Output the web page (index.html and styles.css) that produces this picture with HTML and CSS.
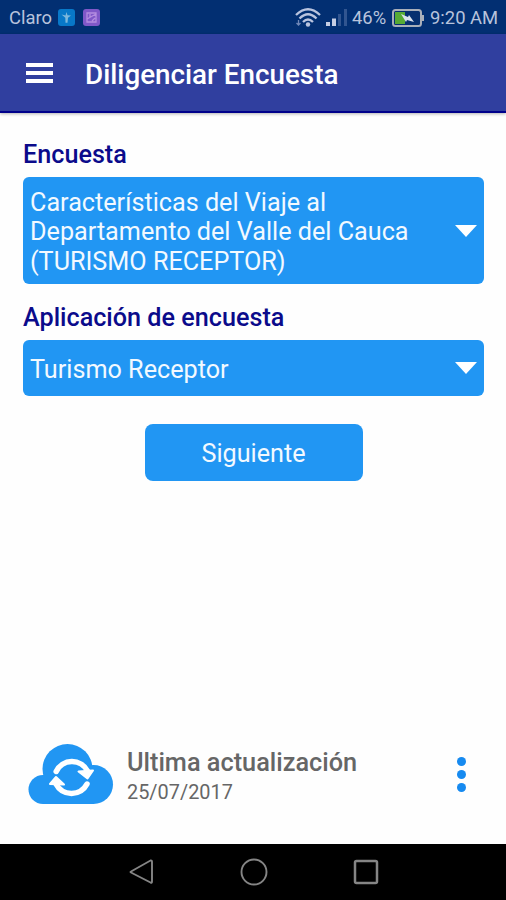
FILE: index.html
```html
<!DOCTYPE html>
<html lang="es">
<head>
  <meta charset="UTF-8">
  <meta name="viewport" content="width=device-width, initial-scale=1">
  <title>Diligenciar Encuesta</title>
  <link rel="stylesheet" href="styles.css">
</head>
<body>
  <div class="screen">
    <div class="status-bar">
      <span class="carrier">Claro</span>
      <svg class="notif" width="17" height="17" viewBox="0 0 17 17">
        <rect width="17" height="17" rx="3" fill="#0878c8"/>
        <path d="M3.500 5.500l4 1L8.500 3l1 3.300 3.500.200-3 2.200-.500 5h-2l-.200-5z" fill="#7db7dc"/>
      </svg>
      <svg class="notif" width="17" height="17" viewBox="0 0 17 17">
        <rect width="17" height="17" rx="3" fill="#8058c8"/>
        <path d="M4 4h9v9H4zM4 10l9-5M7 5v3M9 12l3-3" fill="none" stroke="#b48de0" stroke-width="1.300"/>
      </svg>
      <div class="status-right">
        <svg class="wifi" width="26" height="19" viewBox="0 0 26 19">
          <g fill="none" stroke="#b9c4df" stroke-width="2.300">
            <path d="M1 7Q13-4.500 25 7"/>
            <path d="M4.500 10.500Q13 2 21.500 10.500"/>
            <path d="M8 14Q13 9 18 14"/>
          </g>
          <circle cx="13" cy="16.500" r="2.200" fill="#b9c4df"/>
          <path d="M3.500 12v5M1.500 15l2 2 2-2" fill="none" stroke="#7188b8" stroke-width="1.300"/>
        </svg>
        <svg class="signal" width="22" height="18" viewBox="0 0 22 18">
          <path d="M0 13h4v4H0zM6 9.500h4V17H6z" fill="#c5cee4"/>
          <path d="M12 5h3v12h-3zM18 0h3v17h-3z" fill="#315590"/>
        </svg>
        <span class="percent">46%</span>
        <svg class="battery" width="32" height="18" viewBox="0 0 32 18">
          <rect x="1" y="1" width="28" height="16" rx="2.500" fill="#062f70" stroke="#a9afba" stroke-width="2"/>
          <path d="M30 6h2v6h-2z" fill="#a9afba"/>
          <path d="M3 3h10v12H3z" fill="#56ab35"/>
          <path d="M9 5l7 3 1-2 5 7-7-2-1 2z" fill="#dbe2ee"/>
        </svg>
        <span class="clock">9:20 AM</span>
      </div>
    </div>

    <div class="app-bar">
      <div class="menu-icon"><span></span><span></span><span></span></div>
      <h1>Diligenciar Encuesta</h1>
    </div>

    <div class="content">
      <h2 class="label-survey">Encuesta</h2>
      <div class="select select-tall">
        <span class="select-text">Características del Viaje al<br>Departamento del Valle del Cauca<br>(TURISMO RECEPTOR)</span>
        <svg class="arrow" width="22" height="12" viewBox="0 0 22 12"><path d="M0 0h22L11 12z" fill="#fff"/></svg>
      </div>
      <h2 class="label-apply">Aplicación de encuesta</h2>
      <div class="select">
        <span class="select-text">Turismo Receptor</span>
        <svg class="arrow" width="22" height="12" viewBox="0 0 22 12"><path d="M0 0h22L11 12z" fill="#fff"/></svg>
      </div>
      <button class="next-btn">Siguiente</button>
    </div>

    <div class="update">
      <svg class="cloud" width="86" height="62" viewBox="0 0 86 62">
        <g fill="#2196f3">
          <circle cx="39.500" cy="26" r="25"/>
          <circle cx="15" cy="46.500" r="14.500"/>
          <circle cx="65.500" cy="41.500" r="19.500"/>
          <path d="M15 32h50v29H15z"/>
        </g>
        <path d="M28.200 28.500A17.500 17.500 0 0 1 59.500 28" fill="none" stroke="#fff" stroke-width="5.500" stroke-linecap="round"/>
        <path d="M50.500 28.500L65 27.500 59.500 35.500z" fill="#fff" stroke="#fff" stroke-width="2" stroke-linejoin="round"/>
        <path d="M59 41A17.500 17.500 0 0 1 28 41" fill="none" stroke="#fff" stroke-width="5.500" stroke-linecap="round"/>
        <path d="M22 41L28 34 36 41.500z" fill="#fff" stroke="#fff" stroke-width="2" stroke-linejoin="round"/>
      </svg>
      <div class="update-text">
        <div class="update-title">Ultima actualización</div>
        <div class="update-date">25/07/2017</div>
      </div>
      <div class="more"><span></span><span></span><span></span></div>
    </div>

    <div class="nav-bar">
      <svg width="26" height="28" viewBox="0 0 26 28"><path d="M3 13.500L22.500 2.500Q24 2 24 4v19.500q0 2-1.500 1L3 14.500q-1-.500 0-1z" fill="none" stroke="#858585" stroke-width="1.900"/></svg>
      <svg width="28" height="28" viewBox="0 0 28 28"><circle cx="14" cy="14" r="12.500" fill="none" stroke="#858585" stroke-width="1.900"/></svg>
      <svg width="26" height="26" viewBox="0 0 26 26"><rect x="2" y="2" width="22" height="22" rx="1.500" fill="none" stroke="#858585" stroke-width="2.500"/></svg>
    </div>
  </div>
</body>
</html>
```
FILE: styles.css
```css
* {
  box-sizing: border-box;
  margin: 0;
  padding: 0;
}

body {
  font-family: Roboto, sans-serif;
  background: #fefefe;
}

svg {
  display: block;
  flex: none;
}

.screen {
  width: 506px;
  height: 900px;
  display: flex;
  flex-direction: column;
  overflow: hidden;
}

.status-bar {
  height: 34px;
  flex: none;
  display: flex;
  align-items: center;
  padding: 1px 8px 0 9px;
  background: #022f72;
  color: #b8c3dc;
  font-size: 18.4px;
  line-height: 20px;
  white-space: nowrap;
}

.carrier {
  width: 49px;
}

.notif {
  margin-right: 8px;
}

.status-right {
  display: flex;
  align-items: center;
  margin-left: auto;
}

.wifi {
  margin-right: 5px;
}

.signal {
  margin-right: 4px;
}

.percent {
  width: 40px;
}

.clock {
  width: 68px;
  margin-left: 6px;
}

.app-bar {
  height: 79px;
  flex: none;
  display: flex;
  align-items: center;
  padding: 1px 26px 0;
  background: #303f9f;
  border-bottom: 2px solid #00008b;
  box-shadow: 0 1px 3px rgba(0, 0, 0, 0.3);
  color: #fff;
}

.menu-icon {
  width: 27px;
  display: flex;
  flex-direction: column;
  gap: 4px;
  margin-right: 32px;
}

.menu-icon span {
  height: 4px;
  background: #fff;
}

.app-bar h1 {
  padding-top: 4px;
  font-size: 27.8px;
  font-weight: 500;
  line-height: 32px;
}

.content {
  flex: 1;
  display: flex;
  flex-direction: column;
  padding: 27px 22px 0 23px;
}

.content h2 {
  height: 37px;
  font-size: 25.2px;
  font-weight: 500;
  line-height: 30px;
  color: #0b0b8b;
}

.content .label-apply {
  margin-top: 19px;
}

.select {
  height: 56px;
  display: flex;
  align-items: center;
  justify-content: space-between;
  padding: 0 7px;
  border-radius: 6px;
  background: #2196f3;
  color: #f2f9ff;
  font-size: 25.2px;
  line-height: 29.5px;
}

.select-tall {
  height: 107px;
}

.select-text {
  padding-top: 3px;
}

.next-btn {
  align-self: center;
  width: 218px;
  height: 57px;
  margin-top: 28px;
  border: none;
  border-radius: 8px;
  background: #2196f3;
  color: #f2f9ff;
  font-family: inherit;
  font-size: 25.2px;
  padding-top: 2px;
}

.update {
  flex: none;
  display: flex;
  align-items: center;
  height: 62px;
  margin: 0 40px 39px 28px;
}

.update-text {
  padding-top: 5px;
  margin-left: 13px;
  color: #666;
}

.update-title {
  font-size: 25.3px;
  font-weight: 500;
  line-height: 32px;
}

.update-date {
  font-size: 19.9px;
  line-height: 27px;
}

.more {
  display: flex;
  flex-direction: column;
  gap: 4px;
  margin-left: auto;
}

.more span {
  width: 9px;
  height: 9px;
  border-radius: 50%;
  background: #168af0;
}

.nav-bar {
  height: 56px;
  flex: none;
  display: flex;
  align-items: center;
  justify-content: space-between;
  padding: 0 127px 0 128px;
  background: #000;
}
```
